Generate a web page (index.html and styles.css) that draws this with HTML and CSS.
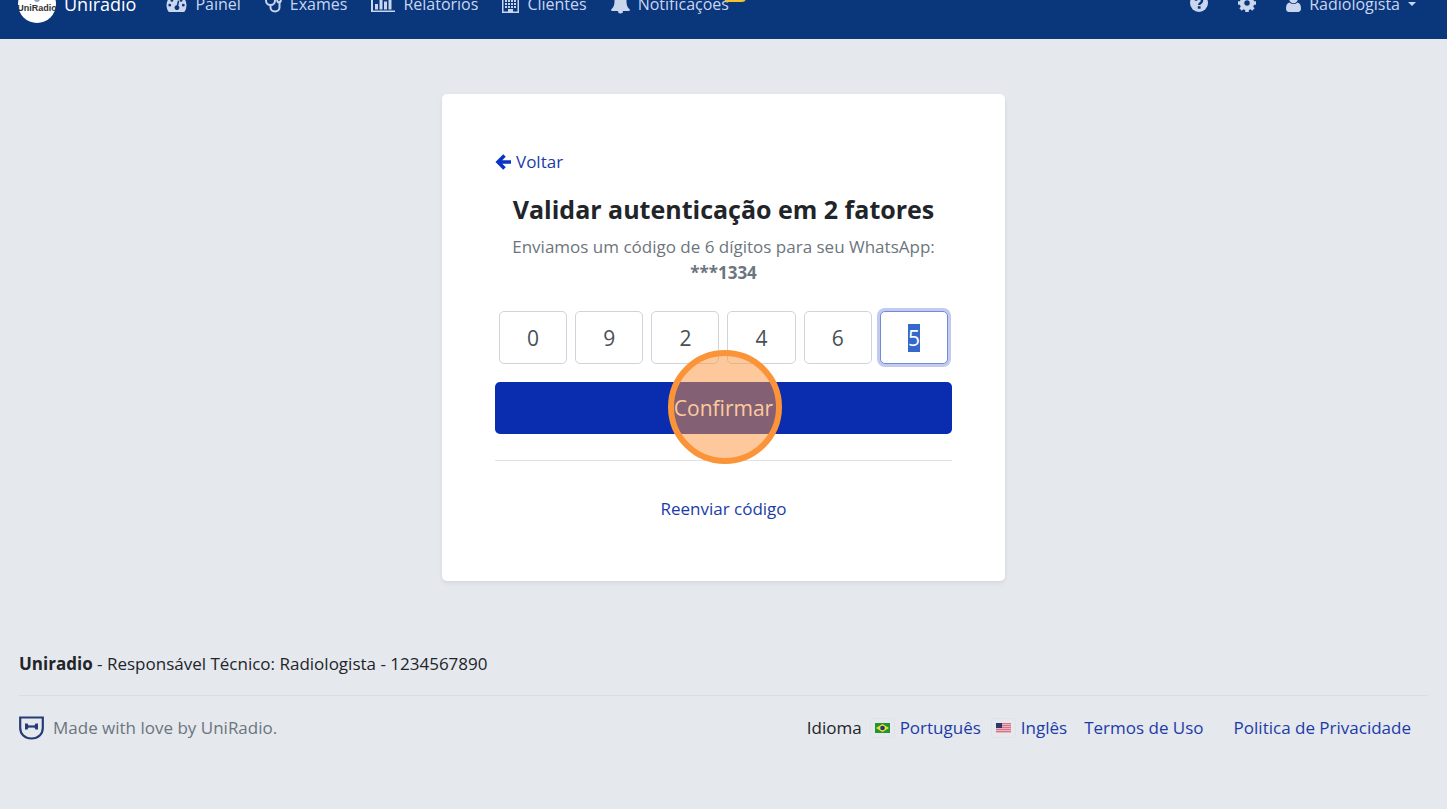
FILE: index.html
```html
<!DOCTYPE html>
<html lang="pt-BR">
<head>
  <meta charset="UTF-8">
  <meta name="viewport" content="width=device-width, initial-scale=1.0">
  <title>Uniradio - Validar autenticação</title>
  <link rel="stylesheet" href="styles.css">
</head>
<body>
  <header class="navbar">
    <a class="brand" href="#">
      <svg class="brand-logo" viewBox="0 0 38 38" aria-hidden="true">
        <circle cx="19" cy="19" r="19" fill="#fff"/>
        <path d="M16 14a3 3 0 0 0 6 0" fill="#8fa3cf"/>
        <text x="19" y="26" text-anchor="middle" class="logo-text">UniRadio</text>
      </svg>
      Uniradio
    </a>
    <nav class="menu">
      <a href="#">
        <svg width="21" height="20" viewBox="0 0 20 20" fill="currentColor"><path fill-rule="evenodd" d="M10 1A10 10 0 0 0 0 11c0 2.500.7 4.600 1.800 6.500.2.300.5.500.8.500h14.800c.3 0 .6-.2.800-.5A12 12 0 0 0 20 11 10 10 0 0 0 10 1zM3.200 9.800a1.400 1.400 0 1 0 .1 2.800 1.400 1.400 0 0 0-.1-2.800zM5.400 5a1.400 1.400 0 1 0 0 2.800 1.400 1.400 0 0 0 0-2.800zM10 3a1.400 1.400 0 1 0 0 2.800A1.400 1.400 0 0 0 10 3zM14.600 5a1.400 1.400 0 1 0 0 2.800 1.400 1.400 0 0 0 0-2.800zM16.800 9.800a1.400 1.400 0 1 0 0 2.800 1.400 1.400 0 0 0 0-2.800zM11.400 6.500l-1.200 4.800a2.400 2.400 0 1 0 1.600.4l1-4.800z"/></svg>
        Painel
      </a>
      <a href="#">
        <svg width="17" height="20" viewBox="0 0 17 20" fill="none" stroke="currentColor" stroke-width="2"><path d="M2.500 1H1v5.500a4.500 4.500 0 0 0 9 0V1H8.500M5.500 11v2.500a4.500 4 0 0 0 9 0V8.500"/><circle cx="14" cy="6.500" r="1.800"/></svg>
        Exames
      </a>
      <a href="#">
        <svg width="24" height="20" viewBox="0 0 24 20" fill="currentColor"><path d="M0 1h2v15.500h22V18H0zM4 10h3v5.500H4zM8.500 5h3v10.500h-3zM13 7.500h3v8h-3zM17.500 3h3v12.500h-3z"/></svg>
        Relatórios
      </a>
      <a href="#">
        <svg width="17" height="20" viewBox="0 0 17 20" fill="currentColor"><path fill-rule="evenodd" d="M0 0h17v19H0zM1.500 1.500v16H6V15h5v2.500h4.500v-16z"/><path d="M3 3h2v2H3zM6 3h2v2H6zM9 3h2v2H9zM12 3h2v2h-2zM3 6h2v2H3zM6 6h2v2H6zM9 6h2v2H9zM12 6h2v2h-2zM3 9h2v2H3zM6 9h2v2H6zM9 9h2v2H9zM12 9h2v2h-2zM3 12h2v2H3zM6 12h2v2H6zM9 12h2v2H9zM12 12h2v2h-2z"/></svg>
        Clientes
      </a>
      <a href="#" class="notifications">
        <svg width="19" height="20" viewBox="0 0 19 20" fill="currentColor"><path d="M9.500 0a1.300 1.300 0 0 0-1.300 1.500C5 2 3.500 4.500 3.500 7c0 5-1.500 7-3.500 8.500C0 16.300.6 17 1.500 17H7a2.500 2.500 0 0 0 5 0h5.500c.9 0 1.500-.7 1.500-1.500C17 14 15.500 12 15.500 7c0-2.500-1.500-5-4.700-5.500A1.300 1.300 0 0 0 9.500 0z"/></svg>
        Notificações
        <span class="badge"></span>
      </a>
    </nav>
    <nav class="menu menu-right">
      <a href="#" aria-label="Ajuda">
        <svg width="18" height="20" viewBox="0 0 18 20"><circle cx="9" cy="9" r="9" fill="currentColor"/><path d="M6 6.800C6.200 3.500 12 3.500 12 7c0 2-2.800 2-2.800 4" fill="none" stroke="#0a367c" stroke-width="2.400"/><path d="M7.800 12.200h2.800v2.500H7.800z" fill="#0a367c"/></svg>
      </a>
      <a href="#" aria-label="Configurações">
        <svg width="18" height="20" viewBox="0 0 18 20"><circle cx="9" cy="9" r="5" fill="none" stroke="currentColor" stroke-width="4.500"/><path d="M9 0v3M9 15v3M0 9h3M15 9h3M2.600 2.600l2.200 2.200M13.200 13.200l2.200 2.200M2.600 15.400l2.200-2.200M13.200 4.800l2.200-2.200" stroke="currentColor" stroke-width="3.600"/></svg>
      </a>
      <a href="#" class="user">
        <svg width="15" height="20" viewBox="0 0 15 20" fill="currentColor"><circle cx="7.500" cy="5" r="4.300"/><path d="M3.500 8.500C1 9 0 11.500 0 14.500 0 16.500 1.200 18 3 18h9c1.800 0 3-1.500 3-3.500 0-3-1-5.500-3.500-6a6 6 0 0 1-8 0z"/></svg>
        Radiologista
        <span class="caret"></span>
      </a>
    </nav>
  </header>

  <main class="card">
    <a class="back" href="#">
      <svg width="17" height="16" viewBox="0 0 17 16" fill="none" stroke="#0a35c4" stroke-width="3.600"><path d="M9.500 1.500L3 8l6.500 6.500M4 8h12"/></svg>
      Voltar
    </a>
    <h1>Validar autenticação em 2 fatores</h1>
    <p class="hint">Enviamos um código de 6 dígitos para seu WhatsApp: <strong>***1334</strong></p>
    <form>
      <div class="code">
        <input type="text" maxlength="1" value="0" aria-label="Dígito 1">
        <input type="text" maxlength="1" value="9" aria-label="Dígito 2">
        <input type="text" maxlength="1" value="2" aria-label="Dígito 3">
        <input type="text" maxlength="1" value="4" aria-label="Dígito 4">
        <input type="text" maxlength="1" value="6" aria-label="Dígito 5">
        <input type="text" maxlength="1" value="5" aria-label="Dígito 6" id="lastDigit">
      </div>
      <div class="submit">
        <button type="button">Confirmar</button>
        <span class="click-mark"></span>
      </div>
    </form>
    <hr>
    <a class="resend" href="#">Reenviar código</a>
  </main>

  <footer class="footer">
    <p class="company"><strong>Uniradio</strong> - Responsável Técnico: Radiologista - 1234567890</p>
    <div class="footer-row">
      <div class="made">
        <svg width="25" height="24" viewBox="0 0 25 24" fill="none" stroke="#263c78" stroke-width="2.200"><path d="M1.200 1.500h22.600V12c0 6-4.500 10.500-11.300 10.500S1.200 18 1.200 12z"/><path d="M7 10.500h11"/><path fill="#263c78" stroke="none" d="M6 7.500h2.500l1 2v2l-1 2H6zM19 7.500h-2.500l-1 2v2l1 2H19z"/></svg>
        Made with love by UniRadio.
      </div>
      <div class="links">
        <span>Idioma</span>
        <a class="lang" href="#">
          <svg class="flag" viewBox="0 0 15 10"><path fill="#21952f" d="M0 0h15v10H0z"/><path fill="#f0dc3c" d="M7.500 1L14 5 7.500 9 1 5z"/><circle cx="7.500" cy="5" r="2.300" fill="#233a70"/></svg>
          Português
        </a>
        <a class="lang" href="#">
          <svg class="flag" viewBox="0 0 15 10"><path fill="#e9b4bf" d="M0 0h15v10H0z"/><path stroke="#d8748a" d="M0 .5h15M0 2.500h15M0 4.500h15M0 6.500h15M0 8.500h15"/><path fill="#2c3768" d="M0 0h6v5H0z"/></svg>
          Inglês
        </a>
        <a class="terms" href="#">Termos de Uso</a>
        <a class="privacy" href="#">Politica de Privacidade</a>
      </div>
    </div>
  </footer>

  <script>
    // deixa o último dígito selecionado
    const lastDigit = document.getElementById("lastDigit");
    lastDigit.focus();
    lastDigit.select();
  </script>
</body>
</html>
```
FILE: styles.css
```css
* {
  box-sizing: border-box;
}
body {
  margin: 0;
  background: #e5e8ed;
  color: #212529;
  font-family: "Segoe UI", "Open Sans", sans-serif;
  font-size: 17px;
  line-height: 26px;
}
a {
  color: #1b3ca8;
  text-decoration: none;
}
svg {
  flex: none;
}

/* menu superior */
.navbar {
  display: flex;
  align-items: center;
  height: 70px;
  margin-top: -31px;
  padding: 0 31px 0 18px;
  background: #0a367c;
}
.brand {
  display: flex;
  align-items: center;
  gap: 8px;
  margin-right: 30px;
  color: #fff;
  font-size: 18px;
}
.brand-logo {
  width: 38px;
  height: 38px;
}
.logo-text {
  font: bold 9px "Liberation Sans", sans-serif;
  fill: #333;
}
.menu {
  display: flex;
  gap: 24px;
}
.menu a {
  display: flex;
  align-items: center;
  gap: 8px;
  color: #c9d6ee;
  font-size: 16px;
}
.menu-right {
  gap: 30px;
  margin-left: auto;
}
.notifications {
  position: relative;
}
.badge {
  position: absolute;
  right: -17px;
  top: -7px;
  width: 22px;
  height: 18px;
  border-radius: 4px;
  background: #f3c230;
}
.caret {
  border: 4px solid transparent;
  border-top-color: currentColor;
  border-bottom: 0;
}

/* cartão */
.card {
  width: 563px;
  max-width: 100%;
  margin: 55px auto 0;
  padding: 55px 53px 59px;
  border-radius: 5px;
  background: #fff;
  box-shadow: 0 2px 4px rgba(0, 0, 0, 0.08);
  text-align: center;
}
.back {
  display: flex;
  align-items: center;
  gap: 4px;
}
h1 {
  margin: 18px 0 9px;
  font-size: 25px;
  line-height: 32px;
}
.hint {
  margin: 0 0 25px;
  color: #6c757d;
}
.hint strong {
  display: block;
}
.code {
  display: grid;
  grid-template-columns: repeat(6, 1fr);
  gap: 8px;
  padding: 0 4px;
}
.code input {
  width: 100%;
  height: 53px;
  padding: 4px;
  border: 1px solid #ced4da;
  border-radius: 5px;
  background: #fff;
  color: #495057;
  font: inherit;
  font-size: 21px;
  text-align: center;
}
.code input:focus {
  outline: 0;
  border-color: #718bdc;
  box-shadow: 0 0 0 3px #c2cbee;
}
.code input::selection {
  background: #3568cc;
  color: #fff;
}
.submit {
  position: relative;
  margin-top: 18px;
}
.submit button {
  display: block;
  width: 100%;
  height: 52px;
  border: 0;
  border-radius: 5px;
  background: #0a2cae;
  color: #fff;
  font: inherit;
  font-size: 21px;
}
.click-mark {
  position: absolute;
  top: -32px;
  left: calc(50% - 56px);
  width: 114px;
  height: 114px;
  border: 6px solid #fb9439;
  border-radius: 50%;
  background: rgba(251, 148, 57, 0.5);
}
hr {
  height: 1px;
  margin: 26px 0 35px;
  border: 0;
  background: #dfe1e3;
}

/* rodapé */
.footer {
  padding: 70px 19px 0;
}
.company {
  margin: 0;
  padding-bottom: 18px;
  border-bottom: 1px solid #dadee2;
}
.footer-row {
  display: flex;
  flex-wrap: wrap;
  justify-content: space-between;
  align-items: center;
  margin-top: 19px;
  padding-right: 17px;
}
.made {
  display: flex;
  align-items: center;
  gap: 9px;
  color: #6c757d;
}
.links {
  display: flex;
  align-items: center;
}
.lang {
  display: flex;
  align-items: center;
  gap: 5px;
  margin-left: 8px;
}
.lang + .lang {
  margin-left: 10px;
}
.flag {
  width: 25px;
  height: 20px;
  padding: 4px;
  border: 1px solid #dfe2e6;
  border-radius: 4px;
}
.terms {
  margin-left: 17px;
}
.privacy {
  margin-left: 30px;
}
```
